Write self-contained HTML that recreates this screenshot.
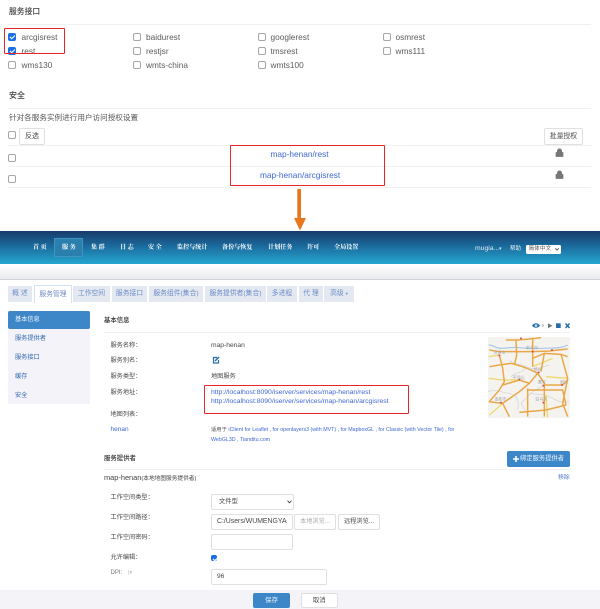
<!DOCTYPE html>
<html lang="zh"><head><meta charset="utf-8"><title>服务</title>
<style>
html,body{margin:0;padding:0;background:#fff}
#p{position:relative;width:600px;height:609px;overflow:hidden;background:#fff;font-family:"Liberation Sans","Noto Sans CJK SC",sans-serif;color:#484848;font-size:6.2px;filter:blur(.3px)}
#p div,#p span.t,#p a{position:absolute;white-space:nowrap;box-sizing:border-box}
.t{line-height:12px;height:12px}
.l{height:1px;background:#f1f1f1}
.c{width:8px;height:8px;border:1px solid #a6a6a6;border-radius:2px;background:#fff}
.k{width:8px;height:8px;border-radius:2px;background:#1a6fe8;color:#fff}
.k:after{content:"";position:absolute;left:1.5px;top:1.7px;width:4px;height:2.2px;border-left:1.3px solid #fff;border-bottom:1.3px solid #fff;transform:rotate(-45deg)}
.b{border:1px solid #e0e0e0;border-radius:2px;background:#fff;text-align:center;color:#484848}
.rb{border:1.3px solid #e8262a;border-radius:1px}
.g{font-size:8.3px;color:#5c5c5c}
.n{color:#fff;font-family:"Liberation Serif","Noto Serif CJK SC",serif;font-weight:700;font-size:6.1px;top:242px}
.tb{top:286px;height:15.5px;background:#e4e9f1;color:#6c8cc8;font-size:6.8px;line-height:15.5px;text-align:center}
.a{color:#3f68d4}
.m{color:#2f66b3;font-size:6.2px;left:15px}
.h{font-size:6.4px;color:#2c2c2c;font-weight:500}
</style></head><body><div id="p">

<span class="t" style="left:9px;top:6px;font-size:7.8px;color:#3c3c3c;font-weight:500">服务接口</span>
<div class="l" style="left:8px;top:24px;width:583px"></div>

<div class="k" style="left:8px;top:33px"></div><span class="t g" style="left:21.5px;top:31px">arcgisrest</span>
<div class="c" style="left:133px;top:33px"></div><span class="t g" style="left:146px;top:31px">baidurest</span>
<div class="c" style="left:257.5px;top:33px"></div><span class="t g" style="left:270.5px;top:31px">googlerest</span>
<div class="c" style="left:382.5px;top:33px"></div><span class="t g" style="left:395.5px;top:31px">osmrest</span>

<div class="k" style="left:8px;top:47px"></div><span class="t g" style="left:21.5px;top:45px">rest</span>
<div class="c" style="left:133px;top:47px"></div><span class="t g" style="left:146px;top:45px">restjsr</span>
<div class="c" style="left:257.5px;top:47px"></div><span class="t g" style="left:270.5px;top:45px">tmsrest</span>
<div class="c" style="left:382.5px;top:47px"></div><span class="t g" style="left:395.5px;top:45px">wms111</span>

<div class="c" style="left:8px;top:61px"></div><span class="t g" style="left:21.5px;top:58.5px">wms130</span>
<div class="c" style="left:133px;top:61px"></div><span class="t g" style="left:146px;top:58.5px">wmts-china</span>
<div class="c" style="left:257.5px;top:61px"></div><span class="t g" style="left:270.5px;top:58.5px">wmts100</span>

<div class="rb" style="left:4px;top:27.7px;width:60.5px;height:26.8px"></div>

<span class="t" style="left:9px;top:90px;font-size:8px;color:#3c3c3c;font-weight:500">安全</span>
<div class="l" style="left:8px;top:108px;width:583px"></div>
<span class="t" style="left:9px;top:112px;font-size:7.6px;color:#555">针对各服务实例进行用户访问授权设置</span>

<div class="c" style="left:8px;top:130.5px"></div>
<div class="b" style="left:19px;top:127.5px;width:26px;height:17px;line-height:15px;font-size:7px">反选</div>
<div class="b" style="left:544px;top:127.5px;width:39px;height:17px;line-height:15px;font-size:6.8px">批量授权</div>
<div class="l" style="left:8px;top:144.5px;width:583px"></div>
<div class="c" style="left:8px;top:153.5px"></div>
<div class="l" style="left:8px;top:166px;width:583px"></div>
<div class="c" style="left:8px;top:175px"></div>
<div class="l" style="left:8px;top:187px;width:583px"></div>

<span class="t a" style="left:270.5px;top:147.5px;font-size:8.3px">map-henan/rest</span>
<span class="t a" style="left:260px;top:169px;font-size:8.3px">map-henan/arcgisrest</span>
<div class="rb" style="left:230px;top:145px;width:154.5px;height:40.5px"></div>

<svg style="position:absolute;left:555px;top:148px" width="9" height="32" viewBox="0 0 9 32">
<path d="M1 4.5h7V8.5H1zM2.3 4.5V3a2.2 2.2 0 0 1 4.4 0V4.5" fill="#777" stroke="#777" stroke-width=".7"/>
<path d="M1 26.5h7V30.5H1zM2.3 26.5V25a2.2 2.2 0 0 1 4.4 0V26.5" fill="#777" stroke="#777" stroke-width=".7"/>
</svg>

<svg style="position:absolute;left:290px;top:187px" width="20" height="46" viewBox="0 0 20 46">
<path d="M7.3 2H11V31H16L10 43.5 4 31H7.3Z" fill="#e8761c"/>
</svg>

<div style="left:0;top:231px;width:600px;height:33px;background:linear-gradient(#173a69,#1b6a9c 45%,#25a6d0)"></div>
<div style="left:54px;top:238px;width:29px;height:19px;background:#2a7fae;border:1px solid #3f93bd"></div>
<div style="left:0;top:264px;width:600px;height:16px;background:linear-gradient(#fff,#e9eaef);border-bottom:1px solid #cfd0d8"></div>
<span class="t n" style="left:33px">首 页</span>
<span class="t n" style="left:62px">服 务</span>
<span class="t n" style="left:91px">集 群</span>
<span class="t n" style="left:120px">日 志</span>
<span class="t n" style="left:148px">安 全</span>
<span class="t n" style="left:177px">监控与统计</span>
<span class="t n" style="left:222px">备份与恢复</span>
<span class="t n" style="left:268px">计划任务</span>
<span class="t n" style="left:307px">许可</span>
<span class="t n" style="left:334px">全局设置</span>
<span class="t" style="left:475px;top:243px;color:#dfeaf3;font-size:6.8px">mugia...</span>
<span class="t" style="left:499px;top:243px;color:#dfeaf3;font-size:5px">▾</span>
<span class="t" style="left:510px;top:243px;color:#e6f0f6;font-size:5.5px">帮助</span>
<div style="left:526px;top:245px;width:35px;height:8.5px;background:#fff;border-radius:1.5px;color:#555;font-size:5.7px;line-height:8.5px;padding-left:2.5px">简体中文
<svg style="position:absolute;left:29px;top:3px" width="4" height="3"><path d="M.3.3 2 2.2 3.7.3" fill="none" stroke="#444" stroke-width=".8"/></svg></div>

<div class="tb" style="left:8px;width:24px">概 述</div>
<div class="tb" style="left:34px;width:38px;top:285px;height:17.5px;background:#fff;border:1px solid #cfe3f4;border-bottom:none;line-height:17px">服务管理</div>
<div class="tb" style="left:73px;width:37px">工作空间</div>
<div class="tb" style="left:112px;width:35px">服务接口</div>
<div class="tb" style="left:149px;width:54px">服务组件(集合)</div>
<div class="tb" style="left:205px;width:61px">服务提供者(集合)</div>
<div class="tb" style="left:267px;width:30px">多进程</div>
<div class="tb" style="left:299px;width:24px">代 理</div>
<div class="tb" style="left:324px;width:30px">高级 <span style="font-size:4.5px">▾</span></div>

<div style="left:8px;top:311px;width:82px;height:93px;background:#f3f3f9"></div>
<div style="left:8px;top:311px;width:82px;height:18px;background:#3d87c8;border-radius:2px"></div>
<span class="t" style="left:15px;top:314px;color:#f2f7fc;font-size:6.2px">基本信息</span>
<span class="t m" style="top:333px">服务提供者</span>
<span class="t m" style="top:351.5px">服务接口</span>
<span class="t m" style="top:370.5px">缓存</span>
<span class="t m" style="top:389.5px">安全</span>

<span class="t h" style="left:104px;top:315px">基本信息</span>
<div class="l" style="left:104px;top:331.5px;width:466px"></div>
<span class="t" style="left:110.5px;top:339.5px">服务名称：</span>
<span class="t" style="left:110.5px;top:355px">服务别名：</span>
<span class="t" style="left:110.5px;top:371px">服务类型：</span>
<span class="t" style="left:110.5px;top:387px">服务地址：</span>
<span class="t" style="left:110.5px;top:409px">地图列表：</span>
<span class="t" style="left:110.5px;top:424px;color:#3f68d4;font-size:6.5px">henan</span>
<span class="t" style="left:211px;top:339.5px;font-size:6.7px">map-henan</span>
<span class="t" style="left:211px;top:371px">地图服务</span>
<svg style="position:absolute;left:212px;top:356px" width="8" height="8" viewBox="0 0 8 8"><path d="M5 1.5H1.5V7H6.5V4" fill="none" stroke="#2a6ea8" stroke-width="1.2"/><path d="M3 5 7 1" stroke="#2a6ea8" stroke-width="1.5"/></svg>
<span class="t a" style="left:211px;top:387px;font-size:6.8px">http://localhost:8090/iserver/services/map-henan/rest</span>
<span class="t a" style="left:211px;top:396px;font-size:6.8px">http://localhost:8090/iserver/services/map-henan/arcgisrest</span>
<div class="rb" style="left:204px;top:384.5px;width:205px;height:29px"></div>
<span class="t" style="left:211px;top:424px;font-size:5.3px"><span style="color:#555">适用于</span> <span class="a">iClient for Leaflet , for openlayers3 (with MVT) , for MapboxGL , for Classic (with Vector Tile) , for</span></span>
<span class="t a" style="left:211px;top:433.5px;font-size:5.3px">WebGL3D , Tianditu.com</span>

<svg style="position:absolute;left:531px;top:321px" width="40" height="9" viewBox="0 0 40 9">
<path d="M1 4.5C3 1.5 7 1.5 9 4.5 7 7.5 3 7.5 1 4.5Z" fill="#2a6ea8"/><circle cx="5" cy="4.5" r="1.3" fill="#cfe0ee"/>
<path d="M17 2.3V7.3L21.5 4.8Z" fill="#777"/>
<rect x="25" y="2.3" width="4.7" height="4.7" fill="#2a6ea8"/>
<path d="M34.5 2.5l4 4.5M38.5 2.5l-4 4.5" stroke="#2a6ea8" stroke-width="1.5"/>
</svg>
<span class="t" style="left:541.5px;top:320px;font-size:4.5px;color:#999">9</span>

<svg style="position:absolute;left:488px;top:337px" width="82" height="81" viewBox="6 6 246 243">
<rect x="6" y="6" width="246" height="243" fill="#f4f3f0"/>
<g fill="none" stroke="#d2d2d2" stroke-width="2">
<path d="M70 75C85 90 100 85 120 95S160 100 190 90M120 95C110 120 95 105 75 125"/>
<path d="M175 150 140 170 105 205 120 230M6 170C30 160 50 175 70 175 95 180 100 200 95 225"/>
<path d="M130 175C160 180 175 175 200 190S230 200 250 200"/>
</g>
<path d="M8 30C20 28 28 42 50 40S80 36 100 38 130 42 170 40 220 42 245 30" fill="none" stroke="#a9c6e4" stroke-width="3.5"/>
<g fill="none" stroke="#f0d870" stroke-width="4">
<path d="M8 130 50 135 100 135 130 145M180 125 245 130M180 180 185 248M10 240 50 205M8 65 40 60 50 100M140 95 200 70"/>
</g>
<g fill="none" stroke="#e9a745" stroke-width="4.4">
<path d="M10 45 40 50 90 50 140 50 190 48 245 42"/>
<path d="M90 15 92 60 85 90M140 12 140 95"/>
<path d="M40 60 50 100 55 140 40 165 10 200"/>
<path d="M60 15 95 15 130 12 165 8"/>
<path d="M140 70 175 55 225 58 245 65"/>
<path d="M10 95 40 90 75 85 110 95 135 105 155 115"/>
<path d="M155 115 130 145 100 170 50 205 8 200"/>
<path d="M50 205 70 245M50 150 100 135 130 145"/>
<path d="M155 115 175 145 175 245M175 150 230 150 245 135"/>
<path d="M125 160V245M125 165 230 165 240 210"/>
<path d="M225 58 245 130 230 205 245 245"/>
<path d="M100 232 125 230 180 225 240 210"/>
<path d="M175 55 165 110"/>
</g>
<g fill="#d8505a">
<circle cx="40" cy="62" r="3"/><circle cx="140" cy="50" r="3"/><circle cx="158" cy="112" r="3"/><circle cx="100" cy="133" r="3"/><circle cx="172" cy="152" r="3"/><circle cx="228" cy="150" r="3"/><circle cx="172" cy="203" r="3"/><circle cx="45" cy="203" r="3"/><circle cx="105" cy="10" r="3"/><circle cx="198" cy="45" r="3"/>
</g>
<g fill="#9f9f9f" font-size="12" font-family="Liberation Sans,Noto Sans CJK SC,sans-serif">
<text x="22" y="57">济源市</text><text x="120" y="42">新乡市</text><text x="142" y="108">郑州</text><text x="80" y="132">平顶山</text><text x="155" y="146">漯河</text><text x="222" y="145">周口</text><text x="26" y="196">南阳市</text><text x="148" y="196">驻马店</text>
</g>
</svg>

<span class="t h" style="left:104px;top:453px">服务提供者</span>
<div style="left:507px;top:451px;width:63px;height:15.5px;background:#3d87c8;border-radius:2px;color:#eef5fb;font-size:6.3px;line-height:15.5px;padding-left:13px"><svg style="position:absolute;left:6px;top:4.5px" width="6" height="6"><path d="M3 0V6M0 3H6" stroke="#fff" stroke-width="1.6"/></svg>绑定服务提供者</div>
<div class="l" style="left:104px;top:468.5px;width:466px"></div>
<span class="t" style="left:104px;top:472px;font-size:7.4px;color:#444">map-henan<span style="font-size:5.7px">(本地地图服务提供者)</span></span>
<span class="t" style="left:558px;top:472px;color:#4f76cc;font-size:5.9px">移除</span>

<span class="t" style="left:110.5px;top:492px">工作空间类型：</span>
<span class="t" style="left:110.5px;top:512px">工作空间路径：</span>
<span class="t" style="left:110.5px;top:532px">工作空间密码：</span>
<span class="t" style="left:110.5px;top:552px">允许编辑：</span>
<span class="t" style="left:110.5px;top:567px;font-size:6px;color:#777">DPI:</span>
<span class="t" style="left:128px;top:567px;font-size:5.5px;color:#bbb">|▾</span>

<div class="b" style="left:211px;top:494px;width:82.5px;height:15.5px;line-height:14px;text-align:left;padding-left:7px;font-size:6.3px">文件型
<svg style="position:absolute;left:75px;top:5px" width="5" height="4"><path d="M.5.7 2.5 2.8 4.5.7" fill="none" stroke="#444" stroke-width=".9"/></svg></div>
<div class="b" style="left:211px;top:514px;width:81.5px;height:15.5px;line-height:14px;text-align:left;padding-left:5px;overflow:hidden;font-size:6.9px"><span style="display:block;width:70px;overflow:hidden">C:/Users/WUMENGYAO</span></div>
<div class="b" style="left:294px;top:514px;width:42px;height:15.5px;line-height:14px;font-size:6.2px;color:#aaa">本地浏览...</div>
<div class="b" style="left:338px;top:514px;width:42px;height:15.5px;line-height:14px;font-size:6.2px">远程浏览...</div>
<div class="b" style="left:211px;top:534px;width:81.5px;height:15.5px"></div>
<div class="k" style="left:211px;top:555px;width:6px;height:6px"></div>
<div class="b" style="left:211px;top:569px;width:116px;height:15.5px;line-height:14px;text-align:left;padding-left:5px;font-size:6.6px">96</div>

<div style="left:0;top:590px;width:600px;height:19px;background:#f3f3f8"></div>
<div style="left:253px;top:593px;width:37px;height:15px;background:#3d87c8;border-radius:2px;color:#e8f1f9;font-size:6.5px;line-height:15px;text-align:center">保存</div>
<div class="b" style="left:301px;top:593px;width:36.5px;height:15px;line-height:13.5px;font-size:6.4px">取消</div>

</div></body></html>
